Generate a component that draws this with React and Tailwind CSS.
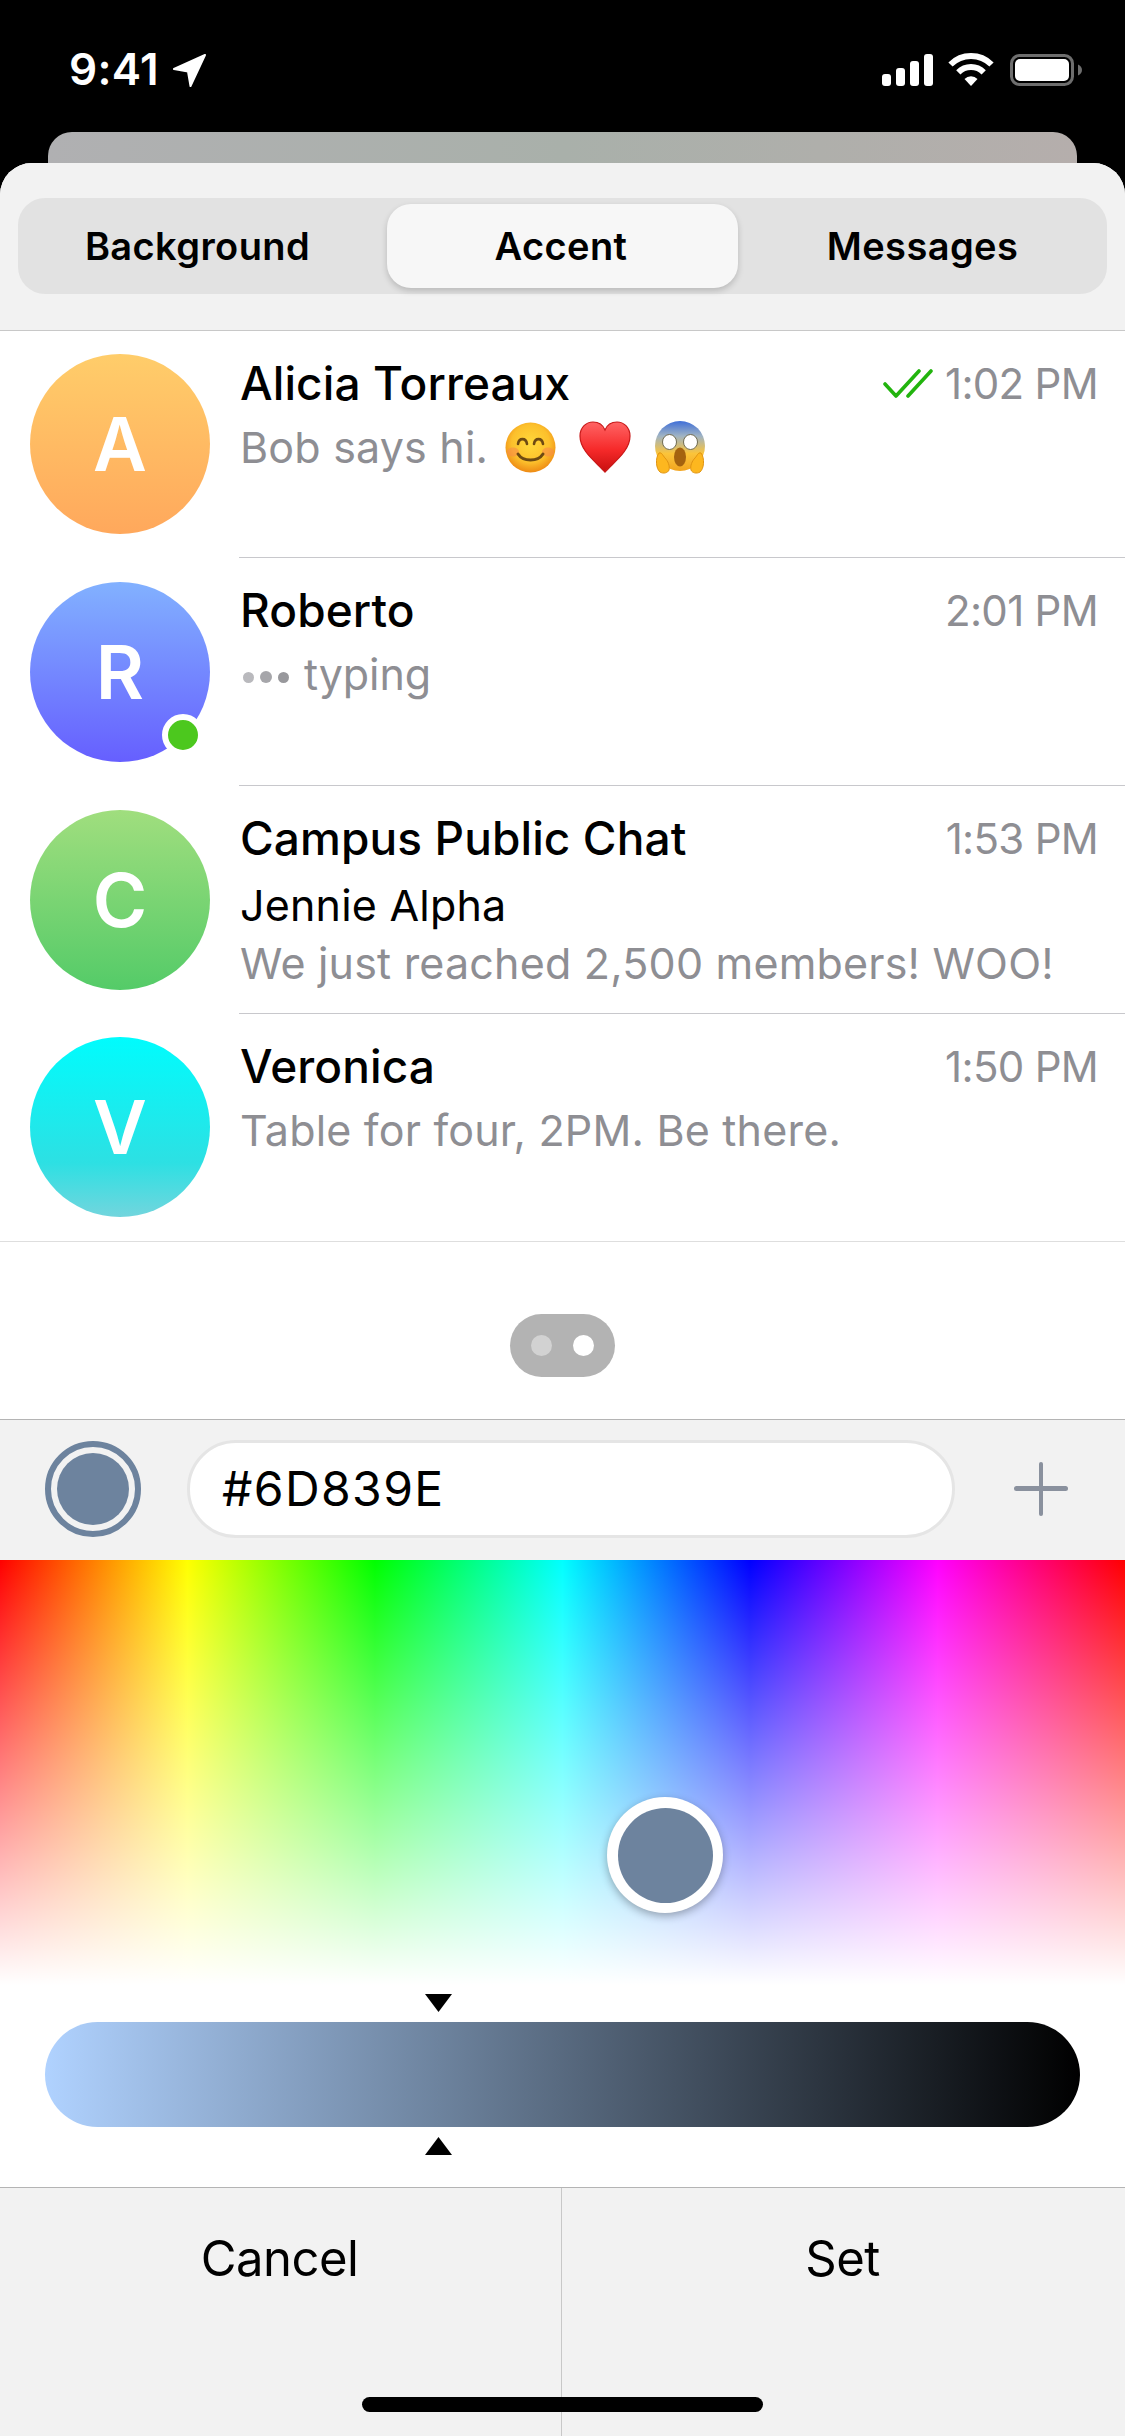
const chats = [
  { name: 'Alicia Torreaux', letter: 'A', time: '1:02 PM', avatar: 'bg-[linear-gradient(to_bottom,#ffcd6a,#ffa85c)]', kind: 'emoji', sent: true },
  { name: 'Roberto', letter: 'R', time: '2:01 PM', avatar: 'bg-[linear-gradient(to_bottom,#82b1ff,#665fff)]', kind: 'typing', online: true },
  { name: 'Campus Public Chat', letter: 'C', time: '1:53 PM', avatar: 'bg-[linear-gradient(to_bottom,#a0de7e,#54cb68)]', kind: 'group', sender: 'Jennie Alpha', text: 'We just reached 2,500 members! WOO!' },
  { name: 'Veronica', letter: 'V', time: '1:50 PM', avatar: 'bg-[linear-gradient(to_bottom,#00fcfd_0%,#2de0e3_70%,#72d5dd_100%)]', kind: 'text', text: 'Table for four, 2PM. Be there.', last: true },
];

function StatusIcons() {
  return (
    <div className="flex items-center">
      <svg width="51" height="32" viewBox="0 0 51 32" fill="#fff">
        <rect x="0" y="20" width="9" height="12" rx="3" />
        <rect x="14" y="14" width="9" height="18" rx="3" />
        <rect x="28" y="7" width="9" height="25" rx="3" />
        <rect x="42" y="0" width="9" height="32" rx="3" />
      </svg>
      <svg className="ml-[15px]" width="46" height="33" viewBox="0 0 46 33" fill="none" stroke="#fff" strokeWidth="6">
        <path d="M2.5 11.5 A29 29 0 0 1 43.5 11.5" />
        <path d="M10.3 19.3 A18 18 0 0 1 35.7 19.3" />
        <path d="M23 33 L16.5 26 A9 9 0 0 1 29.5 26 Z" fill="#fff" stroke="none" />
      </svg>
      <svg className="ml-[16px]" width="72" height="32" viewBox="0 0 72 32" fill="none">
        <rect x="1.5" y="1.5" width="61" height="29" rx="8" stroke="#6e6e6e" strokeWidth="3" />
        <rect x="5" y="5" width="54" height="22" rx="5" fill="#fff" />
        <path d="M68 10.5 C70.5 11.5 72 13.5 72 16 C72 18.5 70.5 20.5 68 21.5 Z" fill="#6e6e6e" />
      </svg>
    </div>
  );
}

function SmileEmoji() {
  return (
    <svg width="51" height="51" viewBox="0 0 51 51">
      <defs>
        <radialGradient id="smileFace" cx="50%" cy="42%" r="58%">
          <stop offset="0%" stopColor="#ffd93b" />
          <stop offset="65%" stopColor="#fcc02c" />
          <stop offset="100%" stopColor="#ee8a14" />
        </radialGradient>
      </defs>
      <circle cx="25.5" cy="25.5" r="25" fill="url(#smileFace)" />
      <ellipse cx="8" cy="30" rx="6" ry="4.5" fill="#f7894a" opacity="0.55" />
      <ellipse cx="43" cy="30" rx="6" ry="4.5" fill="#f7894a" opacity="0.55" />
      <path d="M13 22 C14 15.5 21 15.5 22 22 M29 22 C30 15.5 37 15.5 38 22" fill="none" stroke="#6e4a12" strokeWidth="2.6" strokeLinecap="round" />
      <path d="M13 32 C18 40 33 40 38 32" fill="none" stroke="#6e4a12" strokeWidth="3" strokeLinecap="round" />
    </svg>
  );
}

function HeartEmoji() {
  return (
    <svg width="52" height="52" viewBox="0 0 52 52">
      <defs>
        <linearGradient id="heartFill" x1="0" y1="0" x2="0" y2="1">
          <stop offset="0%" stopColor="#ff6464" />
          <stop offset="55%" stopColor="#f62a2a" />
          <stop offset="100%" stopColor="#c80f0f" />
        </linearGradient>
      </defs>
      <path d="M26 51 C17 41 1 30 1 15 C1 6 7.5 1 14 1 C19.5 1 24 4 26 9 C28 4 32.5 1 38 1 C44.5 1 51 6 51 15 C51 30 35 41 26 51 Z" fill="url(#heartFill)" stroke="#c81818" strokeWidth="1.2" />
    </svg>
  );
}

function ScreamEmoji() {
  return (
    <svg width="52" height="53" viewBox="0 0 52 53">
      <defs>
        <linearGradient id="screamFace" x1="0" y1="0" x2="0" y2="1">
          <stop offset="0%" stopColor="#3f6fd8" />
          <stop offset="30%" stopColor="#9fb3c4" />
          <stop offset="65%" stopColor="#fbc43a" />
          <stop offset="100%" stopColor="#f2a41f" />
        </linearGradient>
      </defs>
      <circle cx="26" cy="25" r="25" fill="url(#screamFace)" />
      <ellipse cx="15.5" cy="21" rx="7" ry="7.5" fill="#fff" stroke="#6f6a50" strokeWidth="1" />
      <ellipse cx="36.5" cy="21" rx="7" ry="7.5" fill="#fff" stroke="#6f6a50" strokeWidth="1" />
      <ellipse cx="26" cy="36" rx="6" ry="9.5" fill="#a4620f" />
      <path d="M5 32 C1 37 2 48 6 51 C9 53 14 52 15 49 C16 45 14 40 11 37 C9 35 8 31 5 32 Z" fill="#fdb71f" stroke="#e09412" strokeWidth="1" />
      <path d="M47 32 C51 37 50 48 46 51 C43 53 38 52 37 49 C36 45 38 40 41 37 C43 35 44 31 47 32 Z" fill="#fdb71f" stroke="#e09412" strokeWidth="1" />
    </svg>
  );
}

function ChatRow({ chat, first }) {
  return (
    <div className={`flex ${first ? 'h-[227px]' : 'h-[228px]'} ${chat.last ? 'border-b border-[#dedede]' : ''}`}>
      <div className={`relative ml-[30px] mb-px h-[180px] w-[180px] shrink-0 self-center rounded-full ${chat.avatar} flex items-center justify-center`}>
        <span className="text-[74px] font-semibold leading-none text-white">{chat.letter}</span>
        {chat.online && (
          <span className="absolute left-[132px] top-[132px] h-[42px] w-[42px] rounded-full border-[6px] border-white bg-[#4cc81e]" />
        )}
      </div>
      <div className={`ml-[29px] min-w-0 flex-1 pl-px pr-[27px] pt-[24px] ${chat.last ? '' : 'border-b border-[#c8c8cc]'}`}>
        <div className="flex h-[56px] items-center justify-between">
          <span className="text-[46px] font-medium leading-[56px] tracking-[0.1px] text-black">{chat.name}</span>
          <span className="flex items-center pt-[2px] text-[42px] leading-[56px] tracking-[-0.7px] text-[#8e8e93]">
            {chat.sent && (
              <svg className="mr-[12px]" width="50" height="30" viewBox="0 0 50 30" fill="none" stroke="#22b40e" strokeWidth="3.6" strokeLinecap="round" strokeLinejoin="round">
                <path d="M2 15 L13 27 L36 2" />
                <path d="M25 27 L48 2" />
              </svg>
            )}
            {chat.time}
          </span>
        </div>
        {chat.kind === 'emoji' && (
          <div className="mt-[5px] flex h-[62px] items-center text-[43px] leading-[62px] tracking-[0.2px] text-[#8e8e93]">
            <span>Bob says hi.</span>
            <span className="ml-[17px] flex items-center gap-[23px]">
              <SmileEmoji />
              <HeartEmoji />
              <ScreamEmoji />
            </span>
          </div>
        )}
        {chat.kind === 'typing' && (
          <div className="mt-[5px] flex h-[62px] items-center text-[43px] leading-[62px] tracking-[-0.1px] text-[#8e8e93]">
            <span className="ml-[3px] flex items-center gap-[6px] pt-[6px]">
              <span className="h-[11px] w-[11px] rounded-full bg-[#b9b9bd]" />
              <span className="h-[12px] w-[12px] rounded-full bg-[#a6a6aa]" />
              <span className="h-[11px] w-[11px] rounded-full bg-[#98989c]" />
            </span>
            <span className="ml-[15px]">typing</span>
          </div>
        )}
        {chat.kind === 'group' && (
          <div className="mt-[10px] text-[43px] leading-[58px] tracking-[0.2px]">
            <div className="text-black">{chat.sender}</div>
            <div className="whitespace-nowrap text-[#8e8e93]">{chat.text}</div>
          </div>
        )}
        {chat.kind === 'text' && (
          <div className="mt-[5px] text-[43px] leading-[62px] tracking-[0.2px] text-[#8e8e93]">{chat.text}</div>
        )}
      </div>
    </div>
  );
}

export default function App() {
  return (
    <div className="flex h-[2436px] w-[1125px] flex-col overflow-hidden bg-black font-['Inter','Liberation_Sans',sans-serif]">
      {/* Status bar */}
      <div className="flex h-[132px] shrink-0 items-start justify-between pl-[69px] pr-[43px] pt-[53px] text-white">
        <div className="flex h-[34px] items-center">
          <span className="-mt-[2px] text-[44px] font-semibold leading-[34px] tracking-[0.3px]">9:41</span>
          <svg className="ml-[13px]" width="35" height="35" viewBox="0 0 35 35" fill="#fff" stroke="#fff" strokeWidth="2" strokeLinejoin="round">
            <path d="M33 2 L2 16 L16 18.5 L18.5 33 Z" />
          </svg>
        </div>
        <StatusIcons />
      </div>

      {/* Card behind the sheet */}
      <div className="mx-[48px] h-[31px] shrink-0 rounded-t-[24px] bg-[linear-gradient(to_right,#b0b0b2,#a9b0aa_50%,#b5aeac)]" />

      {/* Sheet */}
      <div className="flex min-h-0 flex-1 flex-col overflow-hidden rounded-t-[32px] bg-white">
        <div className="h-[167px] shrink-0 bg-[#f2f2f2] px-[18px] pt-[35px]">
          <div className="grid h-[96px] grid-cols-3 gap-[12px] rounded-[27px] bg-[#e2e2e2] p-[6px] text-[38px] font-semibold leading-none tracking-[0.4px] text-black">
            <div className="flex items-center justify-center pr-[4px]">Background</div>
            <div className="flex items-center justify-center rounded-[24px] bg-[#f7f7f7] pr-[3px] shadow-[0_3px_6px_rgba(0,0,0,0.18)]">Accent</div>
            <div className="flex items-center justify-center pr-[6px]">Messages</div>
          </div>
        </div>
        <div className="h-px shrink-0 bg-[#c8c8c8]" />

        {/* Chat preview */}
        {chats.map((chat, i) => (
          <ChatRow key={chat.name} chat={chat} first={i === 0} />
        ))}
        <div className="flex h-[177px] shrink-0 justify-center pt-[72px]">
          <div className="flex h-[63px] w-[105px] items-center justify-center gap-[21px] rounded-full bg-[#b3b3b3]">
            <span className="h-[21px] w-[21px] rounded-full bg-[#d2d2d2]" />
            <span className="h-[21px] w-[21px] rounded-full bg-white" />
          </div>
        </div>

        {/* Hex input */}
        <div className="flex h-[141px] shrink-0 items-center border-t border-[#b4b4b4] bg-[#f2f2f2] pb-[2px] pl-[45px] pr-[57px]">
          <div className="flex h-[96px] w-[96px] shrink-0 items-center justify-center rounded-full border-[6px] border-[#6d839e]">
            <div className="h-[72px] w-[72px] rounded-full bg-[#6d839e]" />
          </div>
          <div className="ml-[46px] flex h-[98px] min-w-0 flex-1 items-center rounded-full border-[3px] border-[#e5e5e5] bg-white pl-[32px] text-[48px] tracking-[1.4px] text-black">
            #6D839E
          </div>
          <svg className="ml-[59px] shrink-0" width="54" height="54" viewBox="0 0 54 54" fill="#8a919e">
            <rect x="25" y="0" width="4" height="54" rx="2" />
            <rect x="0" y="24" width="54" height="5" rx="2.5" />
          </svg>
        </div>

        {/* Spectrum */}
        <div className="relative h-[425px] shrink-0 bg-[linear-gradient(to_bottom,rgba(255,255,255,0),#fff),linear-gradient(to_right,#f00,#ff0,#0f0,#0ff,#00f,#f0f,#f00)]">
          <div className="absolute left-[607px] top-[237px] flex h-[116px] w-[116px] items-center justify-center rounded-full bg-white shadow-[0_3px_8px_rgba(0,0,0,0.3)]">
            <div className="h-[95px] w-[95px] rounded-full bg-[#6d839e]" />
          </div>
        </div>

        {/* Brightness bar */}
        <div className="flex h-[202px] shrink-0 flex-col bg-white px-[45px] pt-[9px]">
          <svg className="ml-[380px]" width="27" height="18" viewBox="0 0 27 18" fill="#000">
            <path d="M0 0 H27 L13.5 18 Z" />
          </svg>
          <div className="mt-[10px] h-[105px] rounded-full bg-[linear-gradient(to_right,#b0d2ff,#6d839e_38%,#000)]" />
          <svg className="ml-[380px] mt-[10px]" width="27" height="18" viewBox="0 0 27 18" fill="#000">
            <path d="M0 18 H27 L13.5 0 Z" />
          </svg>
        </div>

        {/* Footer */}
        <div className="relative grid flex-1 grid-cols-[562px_1fr] border-t border-[#b4b4b4] bg-[#f2f2f2] text-center text-[49px] leading-[60px] tracking-[-0.5px] text-black">
          <div className="border-r border-[#c8c8c8] pr-[2px] pt-[41px]">Cancel</div>
          <div className="pr-[2px] pt-[41px]">Set</div>
          <div className="absolute bottom-[24px] left-[362px] h-[15px] w-[401px] rounded-full bg-black" />
        </div>
      </div>
    </div>
  );
}
